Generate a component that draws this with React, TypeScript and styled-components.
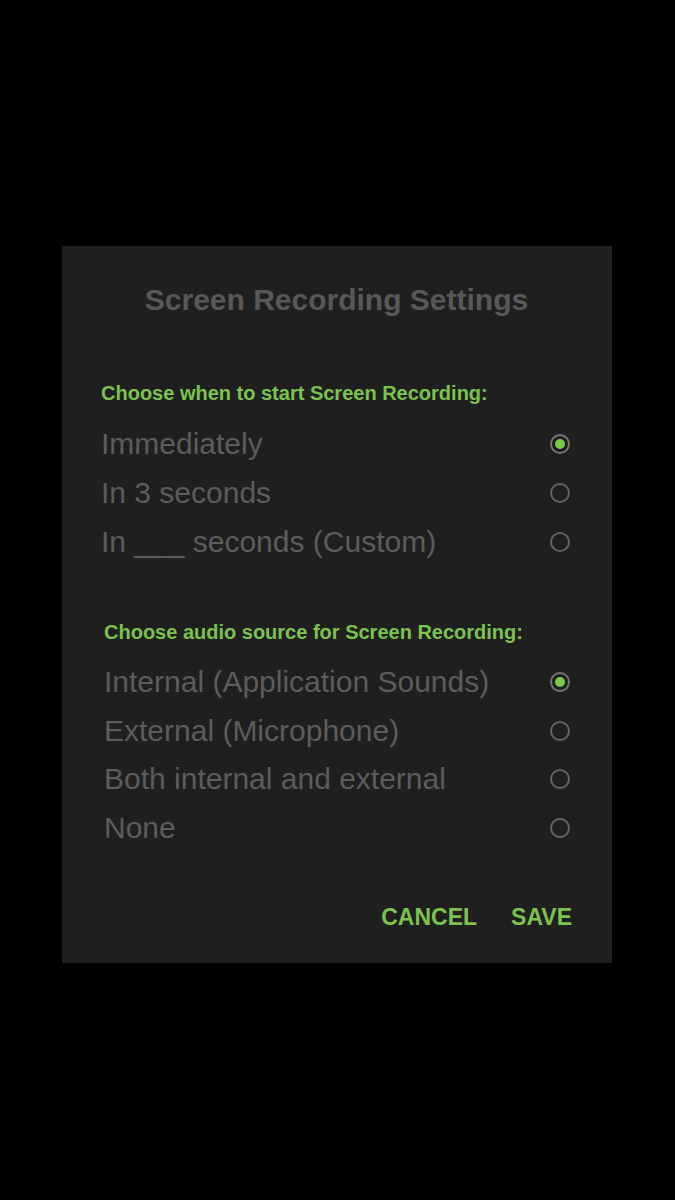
import styled, { createGlobalStyle } from "styled-components";

const GlobalStyle = createGlobalStyle`
  html, body {
    margin: 0;
    padding: 0;
    background: #000;
  }
  body {
    font-family: "Liberation Sans", Arial, sans-serif;
  }
`;

const Screen = styled.div`
  width: 675px;
  height: 1200px;
  background: #000;
  display: flex;
  flex-direction: column;
  align-items: flex-start;
  padding: 246px 0 0 62px;
  box-sizing: border-box;
`;

const Dialog = styled.div`
  width: 550px;
  background: #1f1f1f;
  box-sizing: border-box;
  padding: 36px 40px 31px 39px;
  display: flex;
  flex-direction: column;
`;

const Title = styled.div`
  font-size: 30px;
  line-height: 36px;
  font-weight: 700;
  color: #585858;
  text-align: center;
  margin-bottom: 63px;
`;

const Section = styled.div<{ $shift: number }>`
  display: flex;
  flex-direction: column;
  padding-left: ${(p) => p.$shift}px;
  margin-bottom: ${(p) => (p.$shift ? 50 : 54)}px;
`;

const SectionLabel = styled.div`
  font-size: 20px;
  line-height: 24px;
  font-weight: 700;
  color: #7cc24e;
  margin-bottom: 14px;
`;

const OptionRow = styled.label<{ $height: number }>`
  display: flex;
  align-items: center;
  justify-content: space-between;
  height: ${(p) => p.$height}px;
  font-size: 30px;
  color: #5c5c5c;
  cursor: pointer;
`;

const Radio = styled.span<{ $checked: boolean }>`
  width: 20px;
  height: 20px;
  box-sizing: border-box;
  border-radius: 50%;
  border: 2px solid ${(p) => (p.$checked ? "#767676" : "#636363")};
  display: flex;
  align-items: center;
  justify-content: center;
  margin-right: 2px;

  &::after {
    content: "";
    width: 10px;
    height: 10px;
    border-radius: 50%;
    background: #7cc94a;
    display: ${(p) => (p.$checked ? "block" : "none")};
  }
`;

const Actions = styled.div`
  display: flex;
  justify-content: flex-end;
  gap: 34px;
`;

const ActionButton = styled.button`
  background: none;
  border: none;
  padding: 0;
  font-family: "Liberation Sans", Arial, sans-serif;
  font-size: 23px;
  line-height: 30px;
  font-weight: 700;
  color: #7cc24e;
  cursor: pointer;
`;

const startOptions = ["Immediately", "In 3 seconds", "In ___ seconds (Custom)"];
const audioOptions = [
  "Internal (Application Sounds)",
  "External (Microphone)",
  "Both internal and external",
  "None",
];

const App = () => {
  return (
    <>
      <GlobalStyle />
      <Screen>
        <Dialog>
          <Title>Screen Recording Settings</Title>
          <Section $shift={0}>
            <SectionLabel>Choose when to start Screen Recording:</SectionLabel>
            {startOptions.map((o, i) => (
              <OptionRow key={o} $height={49}>
                <span>{o}</span>
                <Radio $checked={i === 0} />
              </OptionRow>
            ))}
          </Section>
          <Section $shift={3}>
            <SectionLabel>Choose audio source for Screen Recording:</SectionLabel>
            {audioOptions.map((o, i) => (
              <OptionRow key={o} $height={48.5}>
                <span>{o}</span>
                <Radio $checked={i === 0} />
              </OptionRow>
            ))}
          </Section>
          <Actions>
            <ActionButton>CANCEL</ActionButton>
            <ActionButton>SAVE</ActionButton>
          </Actions>
        </Dialog>
      </Screen>
    </>
  );
};

export default App;
